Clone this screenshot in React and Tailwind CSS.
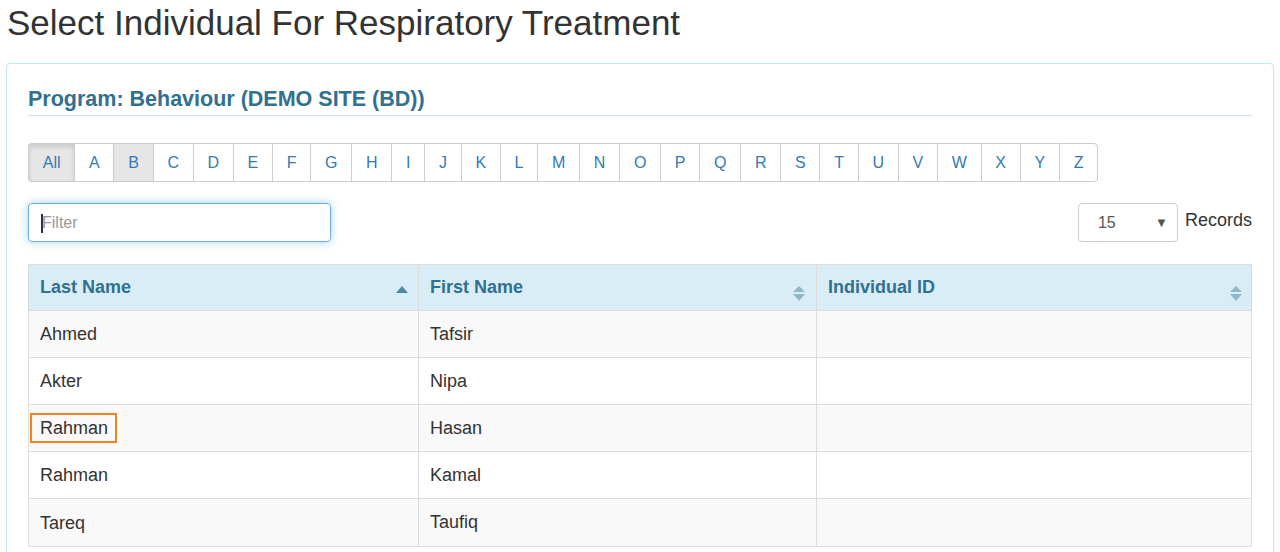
import React from "react";

const letters = ["All","A","B","C","D","E","F","G","H","I","J","K","L","M","N","O","P","Q","R","S","T","U","V","W","X","Y","Z"];

const rows = [
  { last: "Ahmed", first: "Tafsir" },
  { last: "Akter", first: "Nipa" },
  { last: "Rahman", first: "Hasan", mark: true },
  { last: "Rahman", first: "Kamal" },
  { last: "Tareq", first: "Taufiq" },
];

function SortUp() {
  return (
    <svg width="12" height="7" viewBox="0 0 12 7" className="block">
      <path d="M0 7 L6 0 L12 7 Z" fill="#4c88a8" />
    </svg>
  );
}

function SortBoth() {
  return (
    <svg width="12" height="16" viewBox="0 0 12 16" className="block">
      <path d="M0 6 L6 0 L12 6 Z" fill="#8fb8cc" />
      <path d="M0 8 L6 15 L12 8 Z" fill="#8fb8cc" />
    </svg>
  );
}

export default function App() {
  return (
    <div className="bg-white min-h-[552px] overflow-hidden text-[#333]" style={{ fontFamily: '"Liberation Sans", Arial, sans-serif' }}>
      <h1 className="text-[35px] leading-[44px] pl-[7px] pt-[1px] text-[#333] font-normal">
        Select Individual For Respiratory Treatment
      </h1>
      <div className="mt-[18px] ml-[6px] mr-[6px] border border-[#bce8f1] rounded-[4px] px-[21px] pt-[21px] pb-6">
        <div className="border-b border-[#c9e8f1] pb-[2px]">
          <h2 className="text-[21.5px] leading-[28px] font-bold text-[#31708f]">
            Program: Behaviour (DEMO SITE (BD))
          </h2>
        </div>
        <div className="mt-[27px] flex">
          {letters.map((l, i) => {
            const active = l === "All" || l === "B";
            return (
              <div
                key={l}
                className={
                  "h-[39px] flex items-center px-[13.75px] text-[16px] text-[#337ab7] border-y border-l border-[#ccc] " +
                  (i === 0 ? "rounded-l-[4px] " : "") +
                  (i === letters.length - 1 ? "rounded-r-[4px] border-r " : "") +
                  (active ? "bg-[#e6e6e6] border-[#adadad] " : "bg-white ") +
                  (l === "All" ? "shadow-[inset_0_3px_5px_rgba(0,0,0,0.125)]" : "")
                }
              >
                {l}
              </div>
            );
          })}
        </div>
        <div className="mt-[21px] flex items-center justify-between">
          <div className="relative w-[303px] h-[39px] border border-[#66afe9] rounded-[4px] shadow-[0_0_8px_rgba(102,175,233,0.6)] flex items-center">
            <input
              className="w-full h-full bg-transparent outline-none pl-[13px] text-[16px] placeholder:text-[#999]"
              placeholder="Filter"
              style={{ fontFamily: '"Liberation Sans", Arial, sans-serif' }}
            />
            <span className="absolute left-[12px] top-[10px] w-[2px] h-[19px] bg-[#333]" />
          </div>
          <div className="flex items-center">
            <div className="w-[100px] h-[39px] border border-[#ccc] rounded-[4px] flex items-center justify-between pl-[19px] pr-[9px] text-[16px] text-[#555]">
              <span>15</span>
              <span className="text-[13px] text-[#555]">▼</span>
            </div>
            <span className="ml-[7px] text-[18px] text-[#333] relative -top-[2px]">Records</span>
          </div>
        </div>
        <div className="mt-[22px] border border-[#ddd] w-[1224px]">
          <div className="flex bg-[#d9edf7] h-[46px] border-b border-[#ddd] text-[18px] font-bold text-[#31708f]">
            <div className="w-[390px] border-r border-[#ddd] flex justify-between pl-[11px] pr-[10px] pt-[10px]">
              <span className="leading-[25px]">Last Name</span>
              <span className="pt-[11px]"><SortUp /></span>
            </div>
            <div className="w-[398px] border-r border-[#ddd] flex justify-between pl-[11px] pr-[11px] pt-[10px]">
              <span className="leading-[25px]">First Name</span>
              <span className="pt-[11px]"><SortBoth /></span>
            </div>
            <div className="flex-1 flex justify-between pl-[11px] pr-[9px] pt-[10px]">
              <span className="leading-[25px]">Individual ID</span>
              <span className="pt-[11px]"><SortBoth /></span>
            </div>
          </div>
          {rows.map((r, i) => (
            <div
              key={i}
              className={
                "flex h-[47px] text-[18px] text-[#333] " +
                (i % 2 === 0 ? "bg-[#f9f9f9] " : "bg-white ") +
                (i < rows.length - 1 ? "border-b border-[#ddd]" : "")
              }
            >
              <div className="w-[390px] border-r border-[#ddd] flex items-center pl-[11px]">
                <span className="relative leading-[26px]">
                  {r.last}
                  {r.mark && (
                    <span className="absolute -left-[10px] -right-[9px] -top-[2px] -bottom-[2px] border-2 border-[#f58220]" />
                  )}
                </span>
              </div>
              <div className="w-[398px] border-r border-[#ddd] flex items-center pl-[11px]">
                {r.first}
              </div>
              <div className="flex-1" />
            </div>
          ))}
        </div>
      </div>
    </div>
  );
}
